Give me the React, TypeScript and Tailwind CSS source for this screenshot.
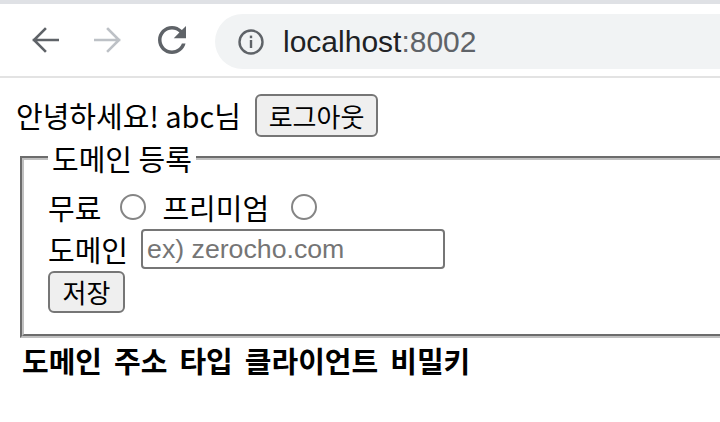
import React from 'react';

const KR = { fontFamily: '"Noto Sans CJK KR", "Noto Sans", sans-serif' };

function BackIcon({ color }: { color: string }) {
  return (
    <svg width="28" height="28" viewBox="0 0 28 28" fill="none" stroke={color} strokeWidth="2.6" strokeLinecap="square">
      <path d="M3 14h24M14 3L3 14l11 11" />
    </svg>
  );
}

function ForwardIcon({ color }: { color: string }) {
  return (
    <svg width="28" height="28" viewBox="0 0 28 28" fill="none" stroke={color} strokeWidth="2.6" strokeLinecap="square">
      <path d="M1 14h24M14 3l11 11-11 11" />
    </svg>
  );
}

function ReloadIcon() {
  return (
    <svg width="30" height="28" viewBox="4 4 16 16" fill="#5f6368">
      <path d="M17.65 6.35C16.2 4.9 14.21 4 12 4c-4.42 0-7.99 3.58-7.99 8s3.57 8 7.99 8c3.73 0 6.84-2.55 7.730-6h-2.08c-.82 2.33-3.04 4-5.65 4-3.31 0-6-2.69-6-6s2.69-6 6-6c1.66 0 3.14.69 4.22 1.78L13 11h7V4l-2.35 2.35z" />
    </svg>
  );
}

function InfoIcon() {
  return (
    <svg width="28" height="28" viewBox="0 0 28 28" fill="none">
      <circle cx="14" cy="14" r="11.5" stroke="#5f6368" strokeWidth="2.4" />
      <rect x="12.8" y="12" width="2.4" height="8" fill="#5f6368" />
      <rect x="12.8" y="7.6" width="2.4" height="2.6" fill="#5f6368" />
    </svg>
  );
}

function Radio({ className = '' }: { className?: string }) {
  return <span className={`inline-block w-[26px] h-[26px] rounded-full border-[2px] border-[#858585] bg-white ${className}`} />;
}

export default function App() {
  return (
    <div className="w-[720px] h-[422px] bg-white overflow-hidden text-black" style={KR}>
      {/* browser chrome */}
      <div className="h-[4px] bg-[#dfe1e5]" />
      <div className="h-[72px] flex items-center">
        <div className="ml-[31px] flex items-center">
          <BackIcon color="#5f6368" />
        </div>
        <div className="ml-[35px] flex items-center">
          <ForwardIcon color="#bdc1c6" />
        </div>
        <div className="ml-[35px] flex items-center">
          <ReloadIcon />
        </div>
        <div className="ml-[28px] h-[55px] flex-1 rounded-l-full bg-[#f1f3f4] flex items-center pl-[22px] mt-[3px]">
          <InfoIcon />
          <span
            className="ml-[18px] text-[30px] leading-none text-[#202124]"
            style={{ fontFamily: '"Liberation Sans", Arial, sans-serif' }}
          >
            localhost<span className="text-[#5f6368]">:8002</span>
          </span>
        </div>
      </div>
      <div className="h-[2px] bg-[#e3e3e3]" />

      {/* page */}
      <div className="pt-[16px]">
        <div className="h-[43px] flex items-center pl-[16px]">
          <span className="text-[29px] leading-none">안녕하세요! abc님</span>
          <button className="ml-[14px] w-[123px] h-[43px] rounded-[6px] border-[2px] border-[#767676] bg-[#efefef] text-[26px] leading-none">
            로그아웃
          </button>
        </div>

        <fieldset className="mt-[6px] ml-[20px] w-[760px] border-[4px] [border-style:groove] border-[#c0c0c0] px-[24px] pt-[14px] pb-[21px]">
          <legend className="px-[4px] text-[29px] leading-[30px]">도메인 등록</legend>
          <div className="h-[40px] flex items-center text-[29px] leading-none">
            <span>무료</span>
            <Radio className="ml-[19px]" />
            <span className="ml-[16px]">프리미엄</span>
            <Radio className="ml-[22px]" />
          </div>
          <div className="h-[44px] flex items-center text-[29px] leading-none">
            <span>도메인</span>
            <input
              className="ml-[13px] w-[304px] h-[40px] rounded-[4px] border-[2px] border-[#767676] px-[4px] text-[26.7px] placeholder:text-[#757575] outline-none"
              style={{ fontFamily: '"Liberation Sans", Arial, sans-serif' }}
              placeholder="ex) zerocho.com"
            />
          </div>
          <button className="w-[77px] h-[42px] rounded-[6px] border-[2px] border-[#767676] bg-[#efefef] text-[26px] leading-none">
            저장
          </button>
        </fieldset>

        <div className="pl-[22px] mt-[4px] flex gap-[12px] text-[29px] font-bold leading-[36px]">
          <span>도메인</span>
          <span>주소</span>
          <span>타입</span>
          <span>클라이언트</span>
          <span>비밀키</span>
        </div>
      </div>
    </div>
  );
}
